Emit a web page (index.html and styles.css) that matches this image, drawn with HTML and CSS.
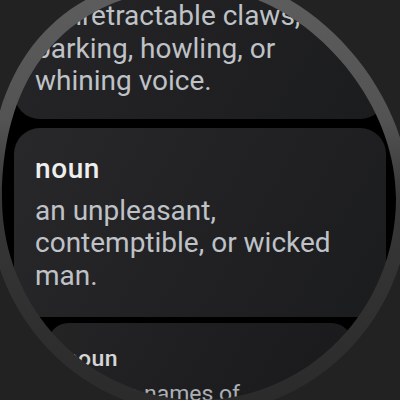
FILE: index.html
```html
<!DOCTYPE html>
<html lang="en">
<head>
<meta charset="utf-8">
<title>Definitions</title>
<link rel="stylesheet" href="styles.css">
</head>
<body>
<div class="screen">
  <div class="list">
    <section class="card card-near">
      <h2 class="pos">noun</h2>
      <p class="def">a domesticated carnivorous mammal that typically has a long snout, an acute sense of smell,<br><span class="keep">nonretractable claws, and a</span><br>barking, howling, or whining voice.</p>
    </section>
    <section class="card">
      <h2 class="pos">noun</h2>
      <p class="def">an unpleasant, contemptible, or wicked man.</p>
    </section>
    <section class="card card-far">
      <h2 class="pos">noun</h2>
      <p class="def">used in names of carnivorous animals resembling dogs.</p>
    </section>
  </div>
  <svg class="bezel" width="400" height="400" viewBox="0 0 400 400" aria-hidden="true">
    <defs>
      <linearGradient id="ringGrad" x1="0" y1="0" x2="0" y2="400" gradientUnits="userSpaceOnUse">
        <stop offset="0" stop-color="#5c5c5c"/>
        <stop offset="0.3" stop-color="#535353"/>
        <stop offset="0.5" stop-color="#373737"/>
        <stop offset="1" stop-color="#2b2b2b"/>
      </linearGradient>
    </defs>
    <path fill="url(#ringGrad)" fill-rule="evenodd" d="M-20 -40H420V440H-20Z M2 198 C2 65.7 74.9 -12 199 -12 C297.5 -12 396 93 396 198 C396 309.5 307.7 400 199 400 C90.3 400 2 309.5 2 198Z"/>
    <path fill="#222222" fill-rule="evenodd" d="M-20 -40H420V440H-20Z M-11.8 198 C-11.8 56.4 66.2 -26.7 199 -26.7 C304.4 -26.7 409.8 85.6 409.8 198 C409.8 317.3 315.3 414.1 199 414.1 C82.7 414.1 -11.8 317.3 -11.8 198Z"/>
  </svg>
</div>
</body>
</html>
```
FILE: styles.css
```css
html, body {
  margin: 0;
  padding: 0;
  background: #222222;
}
.screen {
  position: relative;
  width: 400px;
  height: 400px;
  overflow: hidden;
  background: #000000;
  font-family: Roboto, "Noto Sans", sans-serif;
}
.list {
  display: flex;
  flex-direction: column;
  gap: 9px;
  padding: 0 14px;
  margin-top: -197px;
}
.card {
  border-radius: 26px;
  padding: 25px 20px 25px 21px;
  background: linear-gradient(120deg, #28282a 0%, #222224 45%, #1b1c1e 100%);
}
.card-near {
  padding-bottom: 21px;
}
.card-far {
  margin-top: -3px;
  padding-top: 28px;
  transform: scale(0.82);
  transform-origin: 50% 0;
  opacity: 0.9;
}
.pos {
  margin: 0 0 10px;
  font-size: 28px;
  line-height: 32px;
  font-weight: 500;
  letter-spacing: 0.6px;
  color: #eeeeee;
}
.def {
  margin: 0;
  font-size: 28px;
  line-height: 32.5px;
  font-weight: 400;
  color: #bfc2c7;
}
.keep {
  white-space: nowrap;
}
.bezel {
  position: absolute;
  left: 0;
  top: 0;
  pointer-events: none;
}
```
